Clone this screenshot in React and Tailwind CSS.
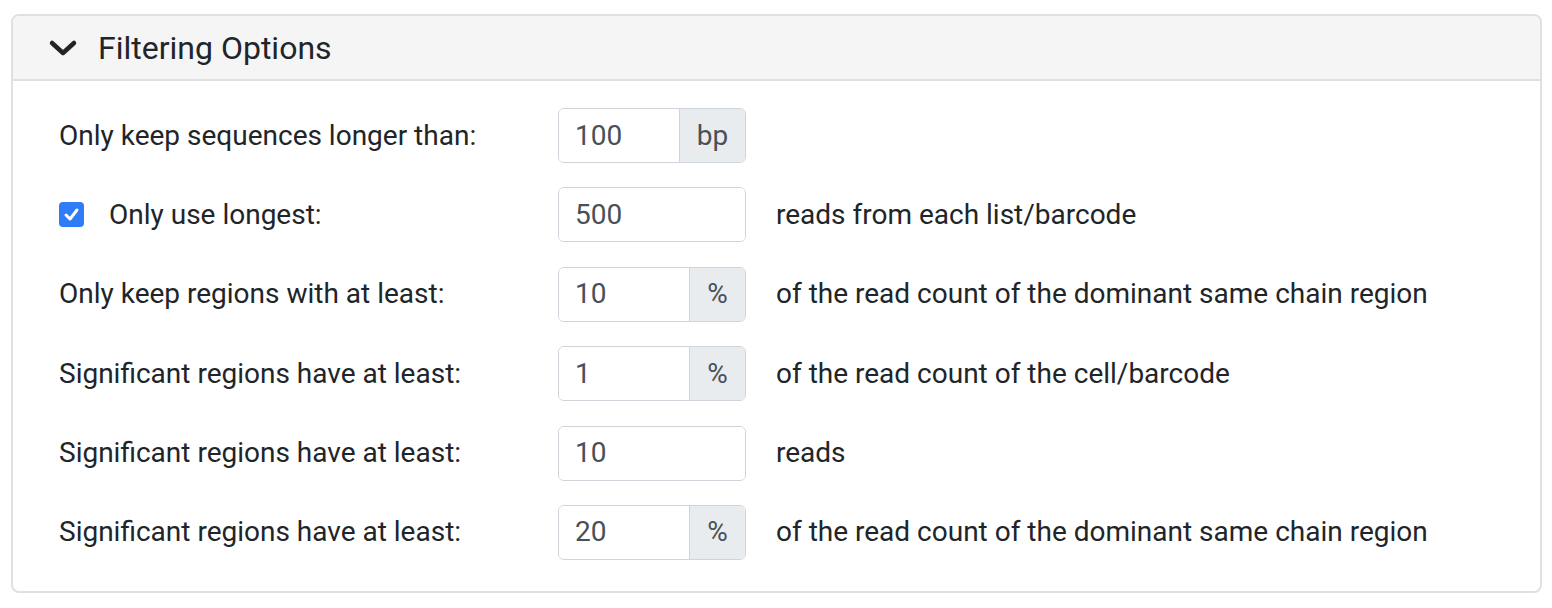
import { useState } from 'react'

const rows = [
  { label: 'Only keep sequences longer than:', value: '100', addon: 'bp', addonW: 'w-[66px]', note: '' },
  { label: 'Only use longest:', value: '500', check: true, note: 'reads from each list/barcode' },
  { label: 'Only keep regions with at least:', value: '10', addon: '%', addonW: 'w-[56px]', note: 'of the read count of the dominant same chain region' },
  { label: 'Significant regions have at least:', value: '1', addon: '%', addonW: 'w-[56px]', note: 'of the read count of the cell/barcode' },
  { label: 'Significant regions have at least:', value: '10', note: 'reads' },
  { label: 'Significant regions have at least:', value: '20', addon: '%', addonW: 'w-[56px]', note: 'of the read count of the dominant same chain region' },
]

function Field({ row }) {
  const [val, setVal] = useState(row.value)
  return (
    <div className="flex h-[55px] w-[188px] rounded-[6px] border border-[#ced4da] overflow-hidden bg-white">
      <input
        value={val}
        onChange={e => setVal(e.target.value)}
        className="min-w-0 flex-1 px-[16px] text-[28px] text-[#495057] outline-none bg-white"
      />
      {row.addon && (
        <span className={`${row.addonW} flex items-center justify-center border-l border-[#ced4da] bg-[#e9ecef] text-[28px] text-[#495057]`}>
          {row.addon}
        </span>
      )}
    </div>
  )
}

export default function App() {
  const [checked, setChecked] = useState(true)
  return (
    <div className="pl-[11px] pr-[10px] pt-[14px] pb-[16px] bg-white font-['Roboto',sans-serif] text-[#212529]">
      <div className="rounded-[8px] border-2 border-[#e0e0e0] overflow-hidden">
        <div className="flex items-center h-[65px] bg-[#f5f5f5] border-b-2 border-[#e0e0e0] pl-[35px]">
          <svg width="30" height="20" viewBox="0 0 30 20" className="mr-[20px]">
            <path d="M4 5 L15 15 L26 5" fill="none" stroke="#212529" strokeWidth="4.5" strokeLinecap="round" strokeLinejoin="round" />
          </svg>
          <span className="text-[32px]">Filtering Options</span>
        </div>
        <div className="pl-[46px] pt-[27px] pb-[31px] flex flex-col gap-[24.4px]">
          {rows.map((row, i) => (
            <div key={i} className="flex items-center">
              <div className="w-[499px] flex items-center text-[28px]">
                {row.check && (
                  <button
                    onClick={() => setChecked(!checked)}
                    className={`w-[25px] h-[25px] rounded-[4px] mr-[25px] flex items-center justify-center ${checked ? 'bg-[#2f7cf6]' : 'border border-[#adb5bd] bg-white'}`}
                  >
                    {checked && (
                      <svg width="17" height="17" viewBox="0 0 17 17">
                        <path d="M3 9 L7 13 L14 4" fill="none" stroke="white" strokeWidth="3" strokeLinecap="round" strokeLinejoin="round" />
                      </svg>
                    )}
                  </button>
                )}
                <span>{row.label}</span>
              </div>
              <Field row={row} />
              {row.note && <span className="ml-[30px] text-[28px]">{row.note}</span>}
            </div>
          ))}
        </div>
      </div>
    </div>
  )
}
